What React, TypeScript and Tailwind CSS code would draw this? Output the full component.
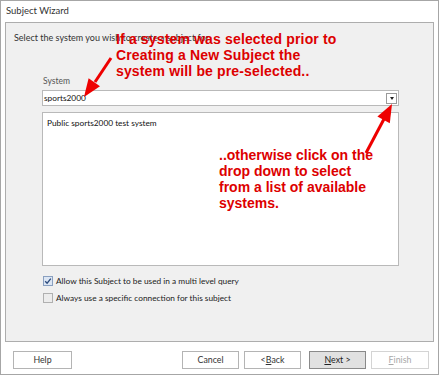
import React from "react";

const ui = { fontFamily: 'Lato, "Open Sans", sans-serif' };
const note = { fontFamily: '"Liberation Sans", Arial, sans-serif' };

function Btn({
  label,
  under,
  focused,
  disabled,
  className = "",
}: {
  label: string;
  under?: number;
  focused?: boolean;
  disabled?: boolean;
  className?: string;
}) {
  const text =
    under === undefined ? (
      label
    ) : (
      <>
        {label.slice(0, under)}
        <span className="underline">{label[under]}</span>
        {label.slice(under + 1)}
      </>
    );
  return (
    <div
      className={`h-[18px] flex items-center justify-center text-[8.8px] border ${
        focused
          ? "bg-[#e1e1e1] border-[#8a8a8a] text-[#222]"
          : disabled
          ? "bg-white border-[#d4d4d4] text-[#a8a8a8]"
          : "bg-white border-[#b4b4b4] text-[#333]"
      } ${className}`}
    >
      {text}
    </div>
  );
}

export default function App() {
  return (
    <div className="relative w-[441px] h-[380px] bg-white" style={ui}>
      <div className="w-[439px] h-[375px] border border-[#a6a6a6] flex flex-col">
        {/* title */}
        <div className="h-[21px] flex items-center px-[5px] text-[9.5px] text-[#333]">
          Subject Wizard
        </div>

        {/* main panel */}
        <div className="mx-[4px] h-[320px] border border-[#adadad] bg-[#f0f0f0] flex flex-col">
          <p className="mt-[8px] ml-[8px] text-[9px] text-[#333] leading-[14px]">
            Select the system you wish to create a subject for
          </p>
          <div className="ml-[36px] w-[357px] mt-[30px]">
            <p className="text-[8.5px] text-[#555] leading-[12px] ml-[1px]">System</p>
            <div className="mt-[3px] h-[16px] bg-white border border-[#b9b9b9] flex items-center justify-between pl-[1px] pr-[1px]">
              <span className="text-[8.3px] text-[#111]">sports2000</span>
              <div className="w-[11px] h-[11px] border border-[#9a9a9a] bg-white flex items-center justify-center">
                <div className="w-0 h-0 border-l-[2.5px] border-r-[2.5px] border-t-[3px] border-l-transparent border-r-transparent border-t-[#222]" />
              </div>
            </div>
            <div className="mt-[6px] h-[154px] bg-white border border-[#b9b9b9] px-[4px] pt-[3px]">
              <p className="text-[8.3px] text-[#111] leading-[14px]">
                Public sports2000 test system
              </p>
            </div>
            <div className="mt-[10px] flex flex-col gap-[7px] ml-[1px]">
              <label className="flex items-center gap-[3px] text-[8.3px] text-[#222] leading-[10px]">
                <span className="w-[10px] h-[10px] border border-[#8aa0c0] bg-[#dce6f4] flex items-center justify-center">
                  <svg width="8" height="8" viewBox="0 0 8 8">
                    <path d="M1.2 4.2 L3.1 6.2 L6.8 1.6" fill="none" stroke="#2b4a7c" strokeWidth="1.3" />
                  </svg>
                </span>
                Allow this Subject to be used in a multi level query
              </label>
              <label className="flex items-center gap-[3px] text-[8.3px] text-[#222] leading-[10px]">
                <span className="w-[10px] h-[10px] border border-[#b0b0b0] bg-[#ececec]" />
                Always use a specific connection for this subject
              </label>
            </div>
          </div>
        </div>

        {/* footer */}
        <div className="flex items-center mt-[9px] pl-[12px] pr-[9px]">
          <Btn label="Help" className="w-[59px]" />
          <div className="flex-1" />
          <div className="flex items-center">
            <Btn label="Cancel" className="w-[57px]" />
            <Btn label="< Back" under={2} className="w-[57px] ml-[5px]" />
            <Btn label="Next >" under={0} focused className="w-[57px] ml-[8px]" />
            <Btn label="Finish" under={0} disabled className="w-[58px] ml-[5px]" />
          </div>
        </div>
      </div>

      {/* red annotations */}
      <div
        className="absolute left-[116px] top-[31px] text-[14px] leading-[16px] font-bold text-[#dd0000] tracking-[0.15px]"
        style={note}
      >
        <p>If a system was selected prior to</p>
        <p>Creating a New Subject the</p>
        <p>system will be pre-selected..</p>
      </div>
      <div
        className="absolute left-[219px] top-[147px] text-[14px] leading-[16px] font-bold text-[#dd0000]"
        style={note}
      >
        <p>..otherwise click on the</p>
        <p>drop down to select</p>
        <p>from a list of available</p>
        <p>systems.</p>
      </div>
      <svg className="absolute inset-0 pointer-events-none" width="441" height="380">
        <line x1="111" y1="58" x2="95" y2="82" stroke="#ee0000" strokeWidth="3" />
        <polygon points="84,97 100,86.2 88.6,78.2" fill="#ee0000" />
        <line x1="366" y1="153" x2="384" y2="119" stroke="#ee0000" strokeWidth="3" />
        <polygon points="392,104 389.8,123.2 377.4,116.6" fill="#ee0000" />
      </svg>
    </div>
  );
}
